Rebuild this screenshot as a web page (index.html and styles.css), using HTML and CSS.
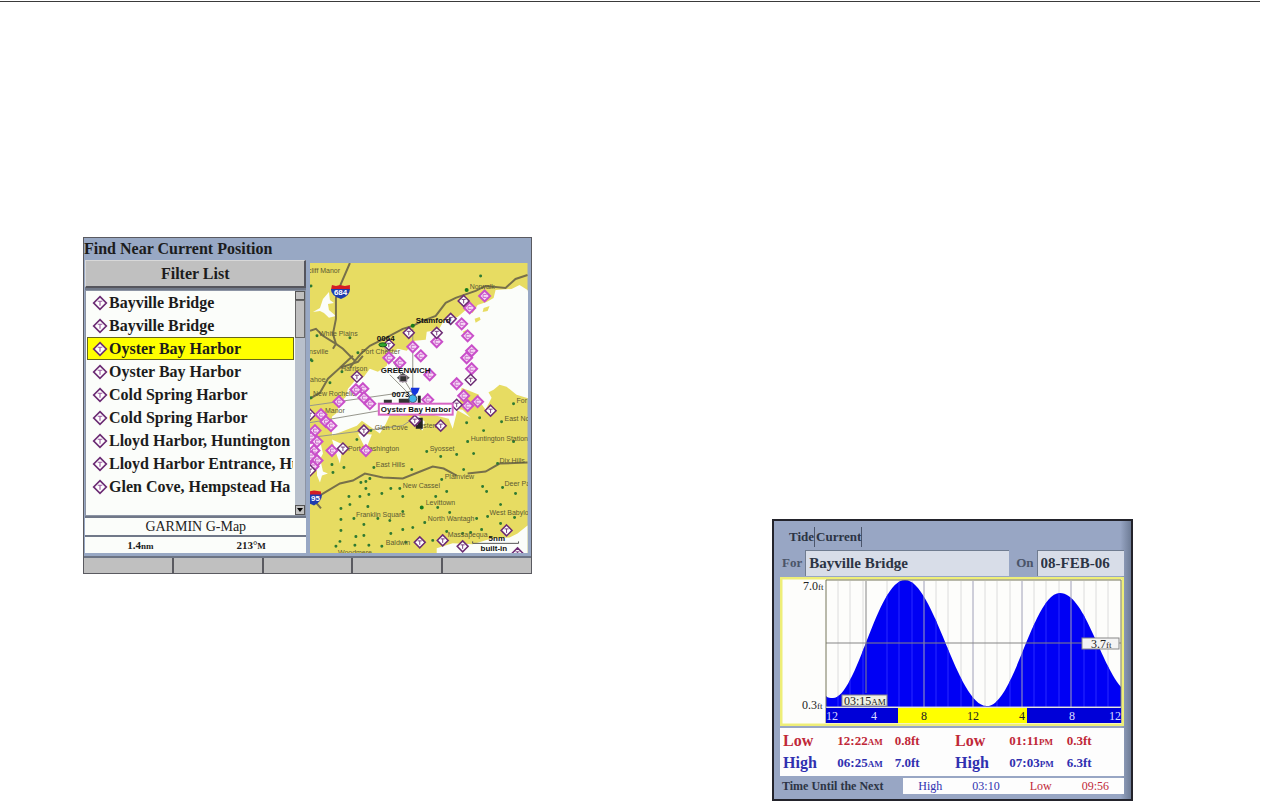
FILE: index.html
```html
<!DOCTYPE html>
<html lang="en">
<head>
    <meta charset="UTF-8">
    <meta name="viewport" content="width=device-width, initial-scale=1.0">
    <title>Tides and Currents</title>
    <link rel="stylesheet" href="styles.css">
</head>
<body>
    <hr class="rule">
    <main class="page">

        <!-- Find screen -->
        <section class="find">
            <h2 class="find-title">Find Near Current Position</h2>
            <div class="find-body">
                <div class="find-side">
                    <button class="filter">Filter List</button>
                    <div class="list-box">
                        <ul class="list">
                            <li><button><svg class="mark"><use href="#tide"/></svg>Bayville Bridge</button></li>
                            <li><button><svg class="mark"><use href="#tide"/></svg>Bayville Bridge</button></li>
                            <li><button class="selected"><svg class="mark"><use href="#tide"/></svg>Oyster Bay Harbor</button></li>
                            <li><button><svg class="mark"><use href="#tide"/></svg>Oyster Bay Harbor</button></li>
                            <li><button><svg class="mark"><use href="#tide"/></svg>Cold Spring Harbor</button></li>
                            <li><button><svg class="mark"><use href="#tide"/></svg>Cold Spring Harbor</button></li>
                            <li><button><svg class="mark"><use href="#tide"/></svg>Lloyd Harbor, Huntington</button></li>
                            <li><button><svg class="mark"><use href="#tide"/></svg>Lloyd Harbor Entrance, Hu</button></li>
                            <li><button><svg class="mark"><use href="#tide"/></svg>Glen Cove, Hempstead Ha</button></li>
                        </ul>
                        <div class="scroll">
                            <button class="scroll-btn" aria-label="Scroll up"></button>
                            <div class="thumb"></div>
                            <button class="scroll-btn down" aria-label="Scroll down"><svg viewBox="0 0 8 8"><path d="M1 2h6L4 6z"/></svg></button>
                        </div>
                    </div>
                    <div class="source">GARMIN G-Map</div>
                    <div class="range"><span>1.4<small>nm</small></span><span>213°<small>M</small></span></div>
                </div>

                <svg class="map" viewBox="0 0 218 291" preserveAspectRatio="xMidYMid slice">
                    <defs>
                        <symbol id="tide" viewBox="-7 -7 14 14" overflow="visible">
                            <path d="M0-5.5 5.5 0 0 5.5-5.5 0z" fill="#fff" stroke="#6c2c74" stroke-width="1.5"/>
                            <path d="M-2-1.5h4M0-1.5v4" fill="none" stroke="#9a5aa0"/>
                        </symbol>
                        <g id="t">
                            <path d="M0-5.5 5.5 0 0 5.5-5.5 0z" fill="#fff" stroke="#6c2c74" stroke-width="1.5"/>
                            <path d="M-2-1.5h4M0-1.5v4" fill="none" stroke="#7a4080"/>
                        </g>
                        <g id="c">
                            <path d="M0-5.5 5.5 0 0 5.5-5.5 0z" fill="#f6d6f6" stroke="#c94fc9" stroke-width="2"/>
                            <path d="M2-1.5h-3.5v3H2" fill="none" stroke="#c86cc8"/>
                        </g>
                    </defs>
                    <rect class="land" width="218" height="291"/>

                    <!-- water -->
                    <g class="water">
                        <path d="M218 27l-8-5-8 4-16 1-2 8-7 4-9 3-5 8-7-3-8 7-14 4-5 9-12 2-1 8-11 1-8 10-9-2-8 5-3 12-9 6-8-3-6 8-9 4-7 8-2 8-7 7-2 9-5 4V173l25-10 5-5 18 13 6-10 6-13 9 5 24-3 24 6 4 10 7-28 2-13 20 8 12-6 6-5 7 2 10 8 13 4 25-1z"/>
                        <path d="M19 29l-6 7-3 9-7 4 7-1 4 2 5 5 7-2-7-6-1-6 6-1-4-3z"/>
                        <path d="M218 263l-10 8-8 4-18 1-19 6-20-1-16 5v5h91z"/>
                        <path d="M0 173l10 5 3 13-4 8-1 13-4-11-4-1zM22 177l5 16 3 8 3-19zM48 171l8 16 6-15zM7 207l4-7 2 9 5 2-6 2-2 7-3-7z"/>
                        <path d="M106 150l9 9-2 9-9-7zM169 132l9-4 4 7-6 12-5-7zM145 146l8 1 8 8zM168 50l6-4-2 6zM159 61l7-3-2 6z"/>
                    </g>
                    <path class="land" d="M165 56l5-2 1 3-5 3zM174 45l6-2-2 5-5 1zM153 69l4-2-1 5z"/>

                    <!-- roads -->
                    <g class="road">
                        <path d="M40 0 31 21 26 35v21l-3 15 3 10 7 5 12 12-5 7"/>
                        <path d="M0 68l6-2 7 7 13 8-3 5M45 98l6-7 9-8 16-8 17-9 10-3 10-5 13-5 10-13 10-5 20-7 10-5 20 2 10-9 12-4"/>
                        <path d="M53 93l-5 6-18 6-12 11-8 14-10 6M43 93l-13 12"/>
                        <path d="M10 233l20-12 13-3 12-7 18 4 20 1 20-8 10-4 11 2 13 7M158 211l18-2 14-8 28-1M0 233l11 13"/>
                    </g>
                    <path class="bearing" d="M0 143l106-15M0 160l70-12M0 175l93-12 12-8M103 66v70M73 82l33 54M80 112l24 24"/>

                    <path class="dots" d="M1 23h0M40 75h0M2 98h0M48 90h0M7 73h0M171 13h0M20 120h0M1 97h0M1 135h0M47 177h0M61 168h0M32 109h0M157 160h0M170 155h0M192 159h0M204 141h0M174 168h0M158 179h0M204 179h0M117 189h0M131 194h0M147 192h0M164 191h0M22 202h0M34 205h0M23 210h0M64 205h0M102 207h0M60 216h0M51 220h0M56 219h0M56 226h0M81 226h0M90 226h0M72 231h0M59 232h0M39 234h0M50 234h0M93 234h0M40 242h0M58 244h0M31 246h0M93 249h0M44 256h0M31 257h0M68 256h0M80 258h0M54 262h0M31 268h0M103 265h0M93 267h0M46 274h0M54 273h0M81 271h0M30 279h0M26 284h0M45 283h0M59 283h0M72 284h0M96 280h0M154 207h0M132 217h0M137 229h0M173 224h0M177 229h0M193 225h0M206 231h0M126 234h0M128 245h0M140 250h0M115 260h0M167 256h0M178 254h0M191 242h0M205 255h0M191 261h0M172 267h0M153 271h0M161 270h0M137 269h0M123 278h0M188 201h0"/>
                    <path class="dots big" d="M157 27h0M103 63h0M112 245h0"/>

                    <g class="place">
                        <text x="-2" y="10">cliff Manor</text>
                        <text x="9" y="73">White Plains</text>
                        <text x="-1" y="91">nsville</text>
                        <text x="51" y="91">Port Chester</text>
                        <text x="160" y="26">Norwalk</text>
                        <text x="31" y="108">Harrison</text>
                        <text x="0" y="119">ahoe</text>
                        <text x="3" y="133">New Rochelle</text>
                        <text x="15" y="150">Manor</text>
                        <text x="65" y="167">Glen Cove</text>
                        <text x="38" y="188">Port Washington</text>
                        <text x="110" y="165">ysten</text>
                        <text x="66" y="204">East Hills</text>
                        <text x="120" y="188">Syosset</text>
                        <text x="161" y="178">Huntington Station</text>
                        <text x="195" y="158">East Nor</text>
                        <text x="207" y="140">For</text>
                        <text x="190" y="200">Dix Hills</text>
                        <text x="93" y="226">New Cassel</text>
                        <text x="135" y="216">Plainview</text>
                        <text x="195" y="224">Deer Pa</text>
                        <text x="116" y="243">Levittown</text>
                        <text x="118" y="259">North Wantagh</text>
                        <text x="180" y="253">West Babylon</text>
                        <text x="46" y="255">Franklin Square</text>
                        <text x="138" y="275">Massapequa</text>
                        <text x="76" y="283">Baldwin</text>
                        <text x="28" y="293">Woodmere</text>
                    </g>

                    <!-- current and tide stations -->
                    <use href="#t" x="79" y="82"/>
                    <use href="#t" x="99" y="70"/>
                    <use href="#c" x="103" y="84"/>
                    <use href="#c" x="111" y="93"/>
                    <use href="#c" x="79" y="95"/>
                    <use href="#c" x="90" y="100"/>
                    <use href="#c" x="160" y="45"/>
                    <use href="#t" x="154" y="38"/>
                    <use href="#c" x="175" y="33"/>
                    <use href="#t" x="141" y="56"/>
                    <use href="#c" x="152" y="61"/>
                    <use href="#c" x="127" y="79"/>
                    <use href="#t" x="127" y="70"/>
                    <use href="#c" x="158" y="73"/>
                    <use href="#c" x="162" y="88"/>
                    <use href="#c" x="157" y="95"/>
                    <use href="#c" x="162" y="106"/>
                    <use href="#t" x="161" y="117"/>
                    <use href="#c" x="147" y="121"/>
                    <use href="#c" x="120" y="112"/>
                    <use href="#c" x="154" y="133"/>
                    <use href="#c" x="158" y="143"/>
                    <use href="#t" x="147" y="142"/>
                    <use href="#c" x="168" y="139"/>
                    <use href="#t" x="181" y="148"/>
                    <use href="#c" x="118" y="137"/>
                    <use href="#t" x="131" y="163"/>
                    <use href="#t" x="47" y="114"/>
                    <use href="#c" x="53" y="126"/>
                    <use href="#c" x="46" y="127"/>
                    <use href="#c" x="54" y="135"/>
                    <use href="#c" x="60" y="141"/>
                    <use href="#c" x="29" y="139"/>
                    <use href="#t" x="0" y="152"/>
                    <use href="#c" x="11" y="152"/>
                    <use href="#c" x="16" y="159"/>
                    <use href="#c" x="21" y="163"/>
                    <use href="#c" x="5" y="168"/>
                    <use href="#c" x="1" y="175"/>
                    <use href="#c" x="7" y="179"/>
                    <use href="#c" x="4" y="188"/>
                    <use href="#c" x="1" y="194"/>
                    <use href="#c" x="7" y="198"/>
                    <use href="#c" x="3" y="204"/>
                    <use href="#t" x="0" y="208"/>
                    <use href="#t" x="54" y="168"/>
                    <use href="#c" x="22" y="188"/>
                    <use href="#t" x="33" y="186"/>
                    <use href="#c" x="56" y="188"/>
                    <use href="#t" x="110" y="280"/>
                    <use href="#t" x="133" y="278"/>
                    <use href="#t" x="153" y="284"/>
                    <use href="#t" x="197" y="268"/>
                    <use href="#t" x="208" y="291"/>

                    <!-- waypoints -->
                    <path d="M87 115l6-5 7 5-7 5z" fill="#555"/>
                    <path d="M90 113h7v6h-7z" fill="#333" stroke="#a9a"/>
                    <ellipse cx="73" cy="82" rx="4" ry="2" fill="#2da52d" stroke="#175a17"/>
                    <path d="M74 137h8v4h-8zM89 136h11v5H89z" fill="#333"/>
                    <path d="M98 147h7v7h-7z" fill="#f4e818"/>
                    <path d="M108 155h5v11h-7v-4h2z" fill="#222"/>
                    <use href="#t" x="105" y="158"/>
                    <circle cx="103" cy="136" r="4" fill="#3fb4ea" stroke="#456"/>
                    <path d="M101 125h9l-2 5-3 3-3-3z" fill="#1535dc"/>
                    <path d="M108 133v9h3v-9z" fill="#222"/>
                    <rect x="69" y="141" width="74" height="11" fill="#fff" stroke="#d765c4" stroke-width="2"/>
                    <g class="waypoint">
                        <text x="67" y="78">0064</text>
                        <text x="106" y="60">Stamford</text>
                        <text x="71" y="110">GREENWICH</text>
                        <text x="82" y="134">0073</text>
                        <text x="71" y="149">Oyster Bay Harbor</text>
                        <text x="179" y="279">5nm</text>
                        <text x="171" y="289">built-in</text>
                    </g>
                    <path d="M163 279v2h46v-2" fill="none" stroke="#555"/>

                    <!-- interstate shields -->
                    <path d="M22 22l4 1 4-1 5 1 5-1v5H21z" fill="#d41c24"/>
                    <path d="M21 26h19q0 7-9 10-10-3-10-10z" fill="#1f3cae"/>
                    <text class="shield" x="24" y="32">684</text>
                    <path d="M-6 228l5 1 5-1 7 1v4H-6z" fill="#d41c24"/>
                    <path d="M-6 232h18q0 7-8 11-10-3-10-11z" fill="#1f3cae"/>
                    <text class="shield" x="1" y="239">95</text>
                </svg>
            </div>
            <div class="softkeys">
                <button aria-label="Soft key 1"></button>
                <button aria-label="Soft key 2"></button>
                <button aria-label="Soft key 3"></button>
                <button aria-label="Soft key 4"></button>
                <button aria-label="Soft key 5"></button>
            </div>
        </section>

        <!-- Tide screen -->
        <section class="tide">
            <div class="tabs">
                <button>Tide</button>
                <button>Current</button>
            </div>
            <div class="fields">
                <label for="station">For</label>
                <input class="station" id="station" type="text" value="Bayville Bridge">
                <label for="date">On</label>
                <input class="date" id="date" type="text" value="08-FEB-06">
            </div>

            <svg class="chart" viewBox="0 0 344 149">
                <defs>
                    <path id="curve" d="M46 119C48 121 50 121 53 121 77 121 97 3 125 3c29 0 52 126 82 126 27 0 46-113 73-113 24 0 39 67 61 94v20H46z"/>
                    <clipPath id="under"><use href="#curve"/></clipPath>
                    <path id="hours" d="M58 4v126M70 4v126M83 4v126M107 4v126M119 4v126M132 4v126M156 4v126M168 4v126M181 4v126M205 4v126M217 4v126M230 4v126M254 4v126M266 4v126M279 4v126M304 4v126M316 4v126M328 4v126"/>
                </defs>
                <rect x="1" y="1" width="342" height="147" fill="#fdfdfb" stroke="#eeee78" stroke-width="3"/>
                <use class="hours" href="#hours"/>
                <use href="#curve" fill="#0000f4"/>
                <use class="hours-on" href="#hours" clip-path="url(#under)"/>
                <path class="grid" d="M144 4v126M193 4v126M242 4v126M291 4v126"/>
                <path d="M46 66h295M86 4v112" fill="none" stroke="#858585"/>
                <path d="M46 146V3h295v143" fill="none" stroke="#77775a"/>
                <path d="M46 131h72v15H46zM247 131h94v15h-94z" fill="#0000d8"/>
                <path d="M118 131h129v15H118z" fill="#ffff00"/>
                <path d="M46 130h295" stroke="#ccc"/>
                <rect x="62" y="118" width="45" height="11" fill="#eef0e4" stroke="#888"/>
                <rect x="302" y="61" width="37" height="11" fill="#f4f4f4" stroke="#888"/>
                <g class="scale">
                    <text x="23" y="13">7.0<tspan>ft</tspan></text>
                    <text x="22" y="132">0.3<tspan>ft</tspan></text>
                    <text x="64" y="128">03:15<tspan>AM</tspan></text>
                    <text x="311" y="71">3.7<tspan>ft</tspan></text>
                    <text x="141" y="143">8</text>
                    <text x="187" y="143">12</text>
                    <text x="239" y="143">4</text>
                </g>
                <g class="scale night">
                    <text x="46" y="143">12</text>
                    <text x="91" y="143">4</text>
                    <text x="289" y="143">8</text>
                    <text x="329" y="143">12</text>
                </g>
            </svg>

            <table class="tides">
                <tr class="low">
                    <th>Low</th><td>12:22<small>AM</small></td><td>0.8ft</td>
                    <th>Low</th><td>01:11<small>PM</small></td><td>0.3ft</td>
                </tr>
                <tr class="high">
                    <th>High</th><td>06:25<small>AM</small></td><td>7.0ft</td>
                    <th>High</th><td>07:03<small>PM</small></td><td>6.3ft</td>
                </tr>
            </table>
            <div class="next">
                <span class="next-label">Time Until the Next</span>
                <div class="next-values">
                    <span class="high">High</span><span class="high">03:10</span>
                    <span class="low">Low</span><span class="low">09:56</span>
                </div>
            </div>
        </section>
    </main>
</body>
</html>
```
FILE: styles.css
```css
* {
    box-sizing: border-box;
}

body {
    margin: 0;
    background: #fff;
    font-family: "Liberation Serif", serif;
    color: #1c1c1c;
}

button, input {
    font: inherit;
    color: inherit;
    margin: 0;
    padding: 0;
    border: none;
    border-radius: 0;
    background: none;
}

.rule {
    margin: 1px 1px 0 0;
    border: none;
    border-top: 1px solid #3a3a3a;
}

.page {
    display: grid;
    grid-template-columns: minmax(0, 449fr) minmax(0, 361fr);
    gap: 240px;
    align-items: start;
    padding: 0 128px 0 83px;
}

/* Find screen */
.find {
    margin-top: 235px;
    border: 1px solid #5a5a60;
    background: #98a8c4;
}

.find-title {
    margin: 0;
    font-size: 16px;
    line-height: 22px;
    white-space: nowrap;
}

.find-body {
    display: grid;
    grid-template-columns: minmax(0, 222fr) minmax(0, 218fr);
    gap: 4px;
    padding: 0 3px 3px 1px;
}

.find-side {
    display: flex;
    flex-direction: column;
    min-width: 0;
    background: #707888;
}

.filter {
    height: 28px;
    border: 1px solid #d0d0d0;
    border-color: #d8d8d8 #55555c #55555c #d8d8d8;
    border-right-width: 2px;
    border-bottom-width: 2px;
    background: #c0c0c0;
    font-size: 16px;
    font-weight: bold;
}

.list-box {
    display: flex;
    flex: 1;
    margin-top: 2px;
    border: 1px solid #8c94a4;
    background: #fbfdfa;
}

.list {
    flex: 1;
    min-width: 0;
    margin: 0;
    padding: 0 1px;
    list-style: none;
}

.list button {
    display: flex;
    align-items: center;
    gap: 1px;
    width: 100%;
    height: 23px;
    padding-left: 4px;
    border: 1px solid transparent;
    overflow: hidden;
    white-space: nowrap;
    font-size: 16px;
    font-weight: bold;
}

.list .selected {
    border-color: #66661c;
    background: #ffff00;
}

.mark {
    flex: none;
    width: 16px;
    height: 16px;
}

.scroll {
    display: flex;
    flex-direction: column;
    width: 10px;
    background: #b8c0cc;
}

.scroll-btn {
    display: flex;
    height: 9px;
    border: 1px solid #555;
    background: #c0c0c0;
}

.scroll-btn svg {
    width: 8px;
    height: 8px;
}

.thumb {
    height: 38px;
    border: 1px solid #666;
    background: #c0c0c0;
}

.scroll .down {
    height: 10px;
    margin-top: auto;
}

.source, .range {
    margin-top: 2px;
    background: #fbfdfa;
    text-align: center;
}

.source {
    height: 17px;
    font-size: 14px;
    line-height: 17px;
    color: #222;
}

.range {
    display: grid;
    grid-template-columns: 1fr 1fr;
    height: 16px;
    font-size: 11px;
    line-height: 16px;
    font-weight: bold;
}

small {
    font-size: 9px;
}

.map {
    display: block;
    width: 100%;
    margin-top: 3px;
}

.land {
    fill: #e7dc62;
}

.water {
    fill: #fbfdfa;
}

.road {
    fill: none;
    stroke: #77704a;
    stroke-width: 2;
}

.bearing {
    fill: none;
    stroke: #96968c;
}

.dots {
    fill: none;
    stroke: #2f7a32;
    stroke-width: 3;
    stroke-linecap: round;
}

.dots.big {
    stroke: #187a1c;
    stroke-width: 4;
}

.place {
    font-family: "Liberation Sans", sans-serif;
    font-size: 7px;
    fill: #5c5932;
}

.waypoint {
    font-family: "Liberation Sans", sans-serif;
    font-size: 8px;
    font-weight: bold;
    fill: #111;
}

.shield {
    font-family: "Liberation Sans", sans-serif;
    font-size: 8px;
    font-weight: bold;
    fill: #fff;
}

.softkeys {
    display: grid;
    grid-template-columns: repeat(5, 1fr);
    gap: 2px;
    border-top: 2px solid #6c7484;
    background: #5a5a60;
}

.softkeys button {
    height: 15px;
    background: #c0c0c0;
}

/* Tide screen */
.tide {
    margin-top: 517px;
    padding: 6px 7px 5px 6px;
    border: 2px solid #23232b;
    background: linear-gradient(to right, #98a6c4 97%, #6e7c96);
    color: #2c3444;
}

.tabs {
    display: flex;
    height: 20px;
    margin-bottom: 3px;
    padding-left: 8px;
    font-size: 13px;
    font-weight: bold;
}

.tabs button {
    padding: 0 0 0 1px;
    border-right: 1px solid #4c566c;
}

.fields {
    display: flex;
    align-items: center;
    height: 26px;
    margin-bottom: 1px;
    font-size: 13px;
}

.fields label {
    padding: 0 3px 0 2px;
    font-weight: bold;
    color: #4a5468;
}

.fields input {
    min-width: 0;
    height: 26px;
    padding-left: 3px;
    border-top: 1px solid #707c90;
    border-left: 1px solid #707c90;
    background: #d8dde8;
    font-size: 15px;
    font-weight: bold;
}

.station {
    flex: 206;
    margin-right: 5px;
}

.date {
    flex: 86;
}

.chart {
    display: block;
    width: 100%;
}

.hours {
    fill: none;
    stroke: #dcdcdc;
}

.hours-on {
    fill: none;
    stroke: #2a2aff;
}

.grid {
    fill: none;
    stroke: #a0a0b8;
}

.scale {
    font-size: 12px;
    fill: #222;
}

.scale tspan {
    font-size: 9px;
}

.scale.night {
    fill: #dcdcff;
}

.tides {
    width: 100%;
    margin-top: 2px;
    padding: 2px 0;
    border-spacing: 0;
    background: #fdfdfd;
    font-size: 13px;
    table-layout: fixed;
}

.tides th, .tides td {
    height: 22px;
    padding: 0 0 0 3px;
    text-align: left;
    font-weight: bold;
    white-space: nowrap;
}

.tides th {
    font-size: 16px;
}

.tides td {
    padding-left: 0;
}

.low {
    color: #c02838;
}

.high {
    color: #3030b0;
}

.next {
    display: flex;
    height: 16px;
    margin-top: 2px;
    font-size: 12px;
    line-height: 16px;
}

.next-label {
    flex: 122;
    padding-left: 2px;
    font-weight: bold;
    white-space: nowrap;
}

.next-values {
    display: flex;
    flex: 222;
    justify-content: space-around;
    background: #fdfdfd;
}
```
